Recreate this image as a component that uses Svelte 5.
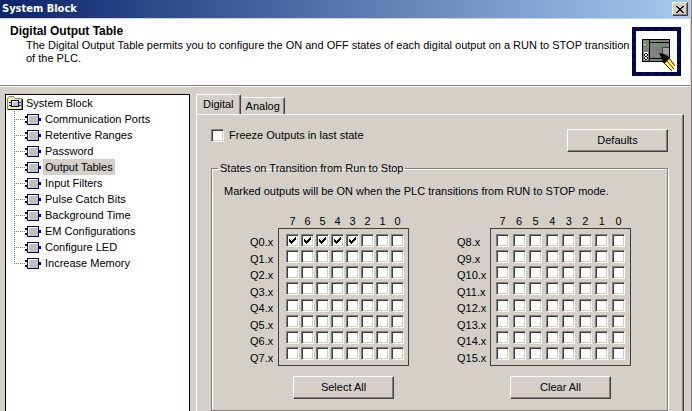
<script lang="ts">
  const pages = [
    "Communication Ports",
    "Retentive Ranges",
    "Password",
    "Output Tables",
    "Input Filters",
    "Pulse Catch Bits",
    "Background Time",
    "EM Configurations",
    "Configure LED",
    "Increase Memory",
  ];
  const bits = [7, 6, 5, 4, 3, 2, 1, 0];
  const banks = [
    { name: "low", first: 0, action: "Select All" },
    { name: "high", first: 8, action: "Clear All" },
  ];
  const rows = [0, 1, 2, 3, 4, 5, 6, 7];

  let selectedPage = $state("Output Tables");
  let selectedTab = $state("Digital");
  let freeze = $state(false);
  let outputs = $state(startStates());

  function startStates() {
    const states = Array.from({ length: 16 }, () => Array(8).fill(false));
    for (let bit = 3; bit < 8; bit++) states[0][bit] = true;
    return states;
  }

  const setAll = (on: boolean) => {
    outputs = outputs.map((row) => row.map(() => on));
  };

  const handleDefaults = () => {
    freeze = false;
    setAll(false);
  };
</script>

<div class="dialog">
  <header class="titlebar">
    <h1>System Block</h1>
    <button class="close" aria-label="Close">
      <svg width="8" height="7" viewBox="0 0 8 7" shape-rendering="crispEdges">
        <path d="M0 0h2v1h1v1h2v-1h1v-1h2v1h-1v1h-1v1h-1v1h1v1h1v1h1v1h-2v-1h-1v-1h-2v1h-1v1h-2v-1h1v-1h1v-1h1v-1h-1v-1h-1v-1h-1z" />
      </svg>
    </button>
  </header>

  <section class="intro">
    <div class="about">
      <h2>Digital Output Table</h2>
      <p>
        The Digital Output Table permits you to configure the ON and OFF states of each digital output on a RUN to STOP transition of the PLC.
      </p>
    </div>
    <svg class="logo" width="49" height="49" viewBox="0 0 49 49" shape-rendering="crispEdges" aria-hidden="true">
      <defs>
        <pattern id="dither" width="2" height="2" patternUnits="userSpaceOnUse">
          <path fill="#000" d="M0 0h2v2h-2z" />
          <path fill="#0000a8" d="M0 0h1v1h-1zM1 1h1v1h-1z" />
        </pattern>
      </defs>
      <path fill="url(#dither)" d="M0 0h49v49h-49z" />
      <path fill="#fff" d="M4 4h41v41h-41z" />
      <path fill="#000" d="M10 12h28v23h-28z" />
      <path fill="#808080" d="M11 13h6v21h-6zM18 13h19v2h-19zM18 16h19v15h-19zM18 32h19v2h-19z" />
      <path fill="#0f0" d="M12 14h2v1h-2zM19 18h1v1h-1zM22 18h1v1h-1zM25 18h1v1h-1zM28 18h1v1h-1zM31 18h1v1h-1zM19 28h1v1h-1zM22 28h1v1h-1zM25 28h1v1h-1z" />
      <path fill="#ff0" d="M12 17h2v1h-2z" />
      <path fill="#fff" d="M12 25h4v8h-4z" />
      <path fill="#000" d="M13 26h2v1h-2zM12 27h1v2h-1zM15 27h1v2h-1zM13 29h2v1h-2zM12 30h1v2h-1zM15 30h1v2h-1zM13 32h2v1h-2z" />
      <path fill="#404040" d="M30 20h7v1h-6v6h-1z" />
      <path fill="#a0a0a0" d="M31 21h6v6h-6z" />
      <g shape-rendering="auto">
        <path fill="#fff" d="M31 35l5-5 6 8-1 5z" />
        <path fill="none" stroke="#ff0" stroke-width="2" d="M32 35l8 8M36 32l6 8" />
        <path fill="none" stroke="#800000" d="M31 35l9 9M34 33l8 9M37 31l6 8" />
        <path fill="#000" d="M27 26l5 1 5 3v2l-4 4h-2l-1-4z" />
      </g>
    </svg>
  </section>

  <main>
    <nav class="tree" aria-label="System Block">
      <div class="root">
        <svg width="16" height="14" viewBox="0 0 16 14" shape-rendering="crispEdges" aria-hidden="true">
          <path fill="#808080" d="M2 0h5v1h1v1h7v12h-15v-12h1v-1h1z" />
          <path fill="#f4f08c" d="M2 1h5v1h1v1h6v10h-13v-11h1z" />
          <path fill="#000" d="M15 3h1v11h-15v-1h14z" />
          <path fill="#000080" d="M4 4h8v2h2v1h-2v2h2v1h-2v1h-8v-1h-2v-1h2v-2h-2v-1h2z" />
          <path fill="#fff" d="M5 5h6v5h-6z" />
          <path fill="#c0c0c0" d="M6 6h5v4h-5z" />
        </svg>
        <span>System Block</span>
      </div>
      <ul>
        {#each pages as page}
          <li>
            <svg width="17" height="11" viewBox="0 0 17 11" shape-rendering="crispEdges" aria-hidden="true">
              <path fill="#000080" d="M2 0h12v4h2v3h-2v4h-12v-2h-2v-2h2v-3h-2v-2h2z" />
              <path fill="#fff" d="M3 1h10v9h-10z" />
              <path fill="#c0c0c0" d="M4 2h9v8h-9z" />
            </svg>
            <button class:selected={page === selectedPage} onclick={() => (selectedPage = page)}>{page}</button>
          </li>
        {/each}
      </ul>
    </nav>

    <div class="sheet">
      <div class="tabs" role="tablist">
        {#each ["Digital", "Analog"] as tab}
          <button role="tab" aria-selected={tab === selectedTab} onclick={() => (selectedTab = tab)}>{tab}</button>
        {/each}
      </div>
      <div class="panel">
        <div class="options">
          <label class="freeze">
            <input type="checkbox" bind:checked={freeze} />
            Freeze Outputs in last state
          </label>
          <button class="push" onclick={handleDefaults}>Defaults</button>
        </div>

        <fieldset>
          <legend>States on Transition from Run to Stop</legend>
          <p>Marked outputs will be ON when the PLC transitions from RUN to STOP mode.</p>
          <div class="banks">
            {#each banks as bank}
              <div class="bank {bank.name}">
                <div class="bits">
                  {#each bits as bit}<span>{bit}</span>{/each}
                </div>
                <div class="names">
                  {#each rows as row}<span>Q{bank.first + row}.x</span>{/each}
                </div>
                <div class="boxes">
                  {#each rows as row}
                    {#each bits as bit}
                      <input
                        type="checkbox"
                        aria-label="Q{bank.first + row}.{bit}"
                        bind:checked={outputs[bank.first + row][bit]}
                      />
                    {/each}
                  {/each}
                </div>
                <button class="push" onclick={() => setAll(bank.name === "low")}>{bank.action}</button>
              </div>
            {/each}
          </div>
        </fieldset>
      </div>
    </div>
  </main>
</div>

<style>
  :global(body) {
    margin: 0;
    overflow: hidden;
    background: #d4d0c8;
  }
  .dialog {
    box-sizing: border-box;
    min-height: 100vh;
    padding-right: 1px;
    border-right: 1px solid #808080;
    background: #d4d0c8;
    color: #000;
    font: 11px/13px "Liberation Sans", Arial, sans-serif;
  }
  h1,
  h2,
  p,
  ul,
  fieldset {
    margin: 0;
    padding: 0;
  }
  button {
    padding: 0;
    border: 0;
    background: none;
    color: inherit;
    font: inherit;
  }
  .titlebar {
    display: flex;
    align-items: center;
    justify-content: space-between;
    height: 18px;
    padding: 0 2px;
    border-bottom: 1px solid #d4d0c8;
    background: linear-gradient(90deg, #0a246a, #a6caf0);
    color: #fff;
  }
  h1 {
    font: bold 11px/16px "DejaVu Sans Condensed", Tahoma, sans-serif;
  }
  .close {
    display: flex;
    align-items: center;
    justify-content: center;
    width: 16px;
    height: 14px;
  }
  .close,
  .push {
    border: 1px solid;
    border-color: #fff #404040 #404040 #fff;
    background: #d4d0c8;
    box-shadow: inset -1px -1px #808080;
  }
  .intro {
    display: flex;
    justify-content: space-between;
    height: 66px;
    border-bottom: 1px solid #808080;
    box-shadow: 0 1px #fff;
    background: #fff;
  }
  .about {
    padding: 5px 0 0 10px;
  }
  h2 {
    font-size: 12px;
    line-height: 14px;
  }
  .about p {
    padding: 1px 0 0 16px;
  }
  .logo {
    flex: none;
    margin: 8px 9px 0 0;
  }
  main {
    display: flex;
    gap: 6px;
    padding: 8px 6px 8px 5px;
  }
  .tree {
    flex: none;
    box-sizing: border-box;
    width: 185px;
    border: 1px solid #000;
    background: #fff;
    line-height: 16px;
  }
  .root {
    display: flex;
    align-items: center;
    gap: 3px;
    padding-left: 1px;
  }
  .tree ul {
    padding-left: 8px;
    list-style: none;
  }
  .tree li {
    display: flex;
    align-items: center;
    height: 16px;
    background:
      repeating-linear-gradient(90deg, #808080 0 1px, transparent 1px 2px) 0 8px / 11px 1px no-repeat,
      repeating-linear-gradient(#808080 0 1px, transparent 1px 2px) 0 0 / 1px 16px no-repeat;
  }
  .tree li:last-child {
    background-size: 11px 1px, 1px 8px;
  }
  .tree li svg {
    margin: 0 1px 0 11px;
  }
  .tree li button {
    padding: 0 2px;
  }
  .tree .selected {
    background: #d4d0c8;
  }
  .sheet {
    flex: 1;
    display: flex;
    flex-direction: column;
  }
  .tabs {
    display: flex;
    align-items: flex-end;
    height: 20px;
  }
  .tabs button {
    height: 17px;
    padding: 0 4px;
    border: 1px solid;
    border-color: #fff #404040 transparent transparent;
    border-bottom: 0;
    border-radius: 2px 2px 0 0;
    box-shadow: inset -1px 0 #808080;
  }
  .tabs [aria-selected="true"] {
    height: 21px;
    margin-bottom: -1px;
    padding: 0 6px 2px;
    border-left-color: #fff;
    background: #d4d0c8;
  }
  .panel {
    flex: 1;
    padding: 14px 15px 8px 14px;
    border: 1px solid;
    border-color: #fff #404040 #404040 #fff;
    box-shadow: inset -1px -1px #808080;
  }
  .options {
    display: flex;
    align-items: flex-start;
    justify-content: space-between;
    height: 33px;
  }
  .freeze {
    display: flex;
    align-items: center;
    gap: 5px;
  }
  .push {
    width: 101px;
    height: 23px;
  }
  input {
    appearance: none;
    box-sizing: border-box;
    width: 13px;
    height: 13px;
    margin: 0;
    border: 1px solid;
    border-color: #808080 #fff #fff #808080;
    background: #fff;
    box-shadow: inset 1px 1px #404040, inset -1px -1px #d4d0c8;
  }
  input:checked {
    background: #fff url("data:image/svg+xml,%3Csvg xmlns='http://www.w3.org/2000/svg' width='7' height='7' shape-rendering='crispEdges'%3E%3Cpath d='M0 2h1v1h1v1h1v-1h1v-1h1v-1h1v-1h1v3h-1v1h-1v1h-1v1h-1v1h-1v-1h-1v-1h-1z'/%3E%3C/svg%3E") center no-repeat;
  }
  fieldset {
    min-width: 0;
    padding: 0 0 11px;
    border: 1px solid #808080;
    box-shadow: 1px 1px #fff, inset 1px 1px #fff;
  }
  legend {
    margin-left: 6px;
    padding: 0 2px;
  }
  fieldset p {
    padding: 10px 0 0 12px;
  }
  .banks {
    display: flex;
    justify-content: space-between;
    padding: 17px 36px 0 38px;
  }
  .bank {
    display: grid;
    grid-template-areas: ". bits" "names boxes" ". action";
  }
  .low {
    grid-template-columns: 28px 131px;
  }
  .high {
    grid-template-columns: 33px 141px;
  }
  .bits {
    grid-area: bits;
    display: flex;
    justify-content: space-between;
    padding: 0 5px 0 8px;
  }
  .bits span {
    width: 13px;
    text-align: center;
  }
  .names {
    grid-area: names;
    display: flex;
    flex-direction: column;
    justify-content: space-between;
    padding: 8px 0 1px;
  }
  .boxes {
    grid-area: boxes;
    box-sizing: border-box;
    display: grid;
    grid-template-columns: repeat(8, 13px);
    justify-content: space-between;
    align-content: space-between;
    height: 138px;
    padding: 5px 4px 5px 7px;
    border: 1px solid #404040;
  }
  .high .bits {
    padding: 0 6px;
  }
  .high .boxes {
    padding: 5px;
  }
  .bank .push {
    grid-area: action;
    justify-self: center;
    margin-top: 10px;
  }
</style>
